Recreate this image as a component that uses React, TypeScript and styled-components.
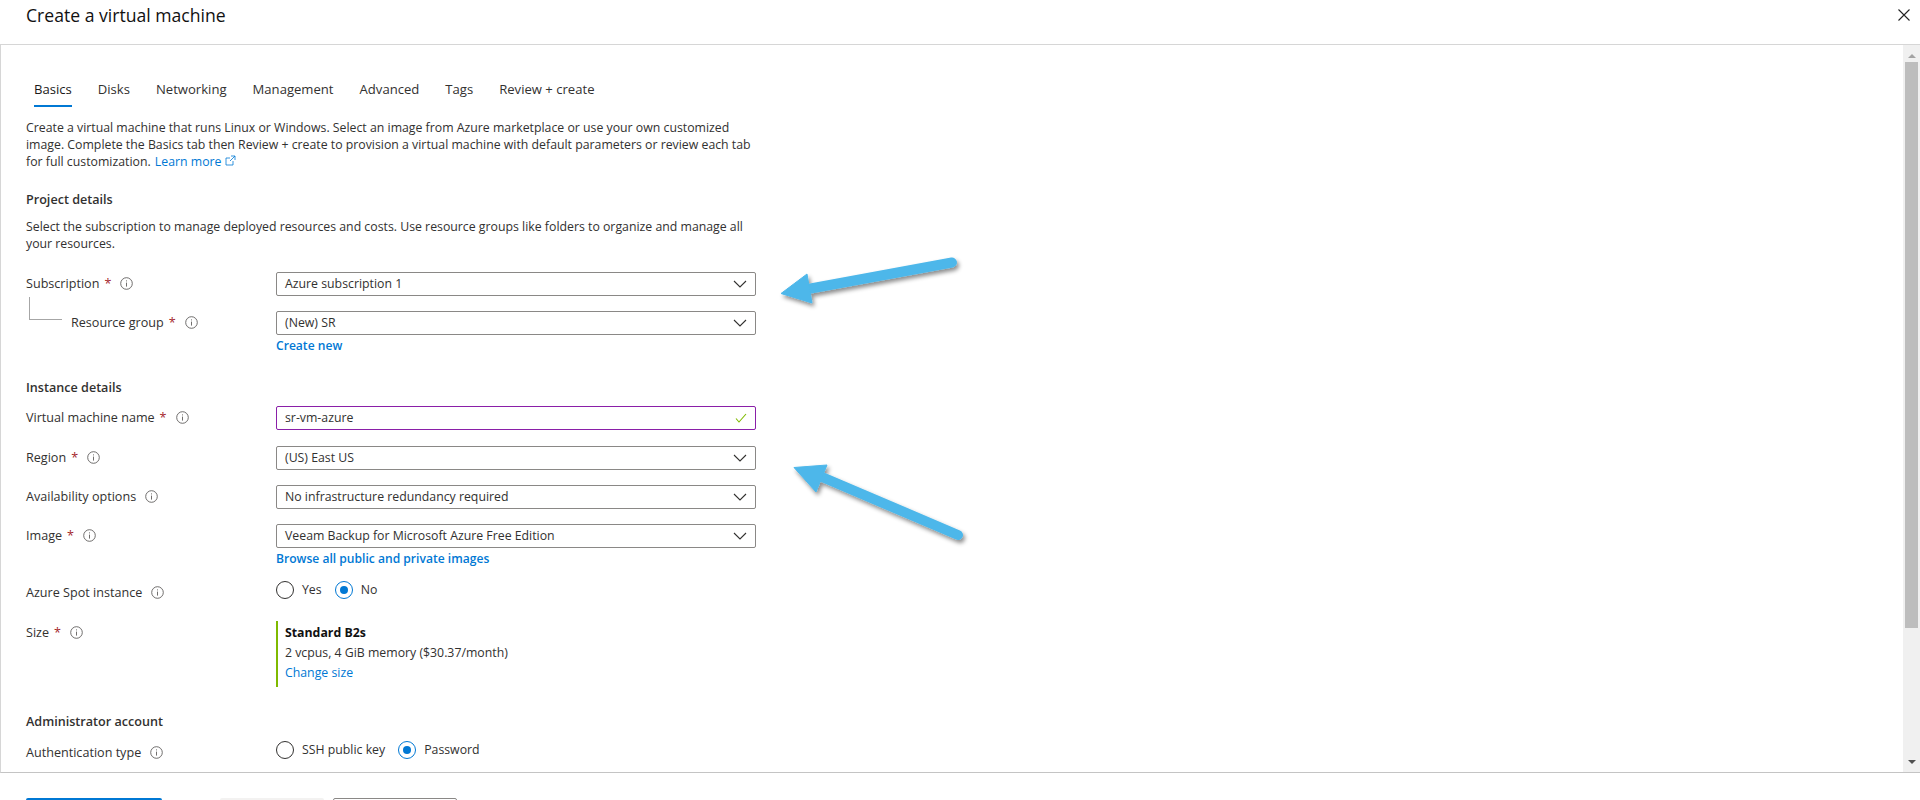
import styled, { createGlobalStyle } from 'styled-components'

const GlobalStyle = createGlobalStyle`
  html, body {
    margin: 0;
    padding: 0;
    background: #fff;
    overflow: hidden;
  }
  * {
    box-sizing: border-box;
  }
`

const Page = styled.div`
  position: relative;
  width: 1920px;
  height: 800px;
  overflow: hidden;
  display: flex;
  flex-direction: column;
  background: #fff;
  color: #323130;
  font-family: 'Open Sans', 'Liberation Sans', sans-serif;
  font-size: 12.3px;
  line-height: 18px;
`

const Header = styled.header`
  flex: 0 0 45px;
  display: flex;
  justify-content: space-between;
  padding: 1px 10px 0 26px;
  border-bottom: 1px solid #d6d6d6;
`

const Title = styled.h1`
  margin: 0;
  font-size: 17.6px;
  line-height: 28px;
  font-weight: 400;
  color: #111;
`

const CloseIcon = styled.svg`
  width: 12px;
  height: 12px;
  margin-top: 8px;
`

const Middle = styled.div`
  flex: 0 0 728px;
  display: flex;
  border-left: 1px solid #d6d6d6;
  border-bottom: 1px solid #c4c4c4;
`

const Content = styled.main`
  flex: 1;
  overflow: hidden;
  padding-left: 25px;
`

const Tabs = styled.nav`
  display: flex;
  gap: 26px;
  margin-top: 35px;
  padding-left: 8px;
  font-size: 13.1px;
`

const Tab = styled.span<{ $active?: boolean }>`
  padding-bottom: 7px;
  border-bottom: 2px solid ${p => (p.$active ? '#0078d4' : 'transparent')};
  color: ${p => (p.$active ? '#1b1a19' : '#323130')};
`

const Para = styled.p<{ $top: number }>`
  width: 730px;
  margin: ${p => p.$top}px 0 0;
  line-height: 16.8px;
`

const Link = styled.a`
  color: #0078d4;
  text-decoration: none;
`

const LearnMore = styled(Link)`
  margin-left: 1px;
`

const StrongLink = styled(Link)`
  display: block;
  font-size: 12.1px;
  font-weight: 600;
  margin-top: 2px;
`

const SectionTitle = styled.h2<{ $top: number }>`
  margin: ${p => p.$top}px 0 0;
  font-size: 12.6px;
  line-height: 18px;
  font-weight: 600;
  color: #323130;
`

const Row = styled.div<{ $top: number }>`
  display: grid;
  grid-template-columns: 250px 480px;
  align-items: start;
  margin-top: ${p => p.$top}px;
`

const Label = styled.div<{ $indent?: boolean }>`
  position: relative;
  display: flex;
  align-items: center;
  height: 24px;
  padding-left: ${p => (p.$indent ? '45px' : '0')};
  font-size: 12.6px;
`

const Star = styled.span`
  color: #a4262c;
  margin-left: 5px;
`

const InfoIcon = styled.svg`
  width: 13px;
  height: 13px;
  margin-left: 9px;
`

const TreeLine = styled.span`
  position: absolute;
  left: 3px;
  top: -14px;
  width: 33px;
  height: 23px;
  border-left: 1px solid #a6a6a6;
  border-bottom: 1px solid #a6a6a6;
`

const Field = styled.div<{ $valid?: boolean }>`
  display: flex;
  align-items: center;
  justify-content: space-between;
  height: 24px;
  padding: 0 8px;
  background: #fff;
  border: 1px solid ${p => (p.$valid ? '#8a1fa8' : '#8a8886')};
  border-radius: 2px;
`

const ChevronIcon = styled.svg`
  width: 14px;
  height: 8px;
`

const CheckIcon = styled.svg`
  width: 12px;
  height: 10px;
`

const RadioGroup = styled.div`
  display: flex;
  align-items: center;
  height: 18px;
`

const Radio = styled.span<{ $checked?: boolean }>`
  width: 18px;
  height: 18px;
  border-radius: 50%;
  border: 1px solid ${p => (p.$checked ? '#0078d4' : '#323130')};
  display: flex;
  align-items: center;
  justify-content: center;
  flex: none;
  &::after {
    content: '';
    display: ${p => (p.$checked ? 'block' : 'none')};
    width: 8px;
    height: 8px;
    border-radius: 50%;
    background: #0078d4;
  }
`

const RadioText = styled.span`
  margin: 0 13px 0 8px;
`

const SizeBlock = styled.div`
  height: 66px;
  padding: 2px 0 0 7px;
  border-left: 2px solid #7fba00;
  line-height: 20px;
`

const SizeName = styled.div`
  font-weight: 700;
  color: #111;
`

const Scrollbar = styled.div`
  flex: 0 0 17px;
  display: flex;
  flex-direction: column;
  align-items: center;
  background: #f0f0f0;
  padding: 9px 2px 0;
`

const ScrollArrow = styled.span<{ $down?: boolean }>`
  width: 0;
  height: 0;
  border-left: 4px solid transparent;
  border-right: 4px solid transparent;
  ${p => (p.$down ? 'border-top: 4px solid #505050;' : 'border-bottom: 4px solid #a3a3a3;')}
`

const ScrollThumb = styled.div`
  width: 13px;
  height: 566px;
  margin-top: 4px;
  margin-bottom: auto;
  background: #bdbdbd;
`

const ScrollEnd = styled.div`
  height: 8px;
`

const Footer = styled.footer`
  flex: 1;
  display: flex;
  padding: 25px 0 0 26px;
`

const FooterButton = styled.div<{ $w: number; $kind: 'primary' | 'muted' | 'plain'; $left: number }>`
  width: ${p => p.$w}px;
  height: 32px;
  margin-left: ${p => p.$left}px;
  border-radius: 2px;
  background: ${p => (p.$kind === 'primary' ? '#0078d4' : p.$kind === 'muted' ? '#f3f2f1' : '#fff')};
  border: 1px solid ${p => (p.$kind === 'plain' ? '#8a8886' : 'transparent')};
`

const ArrowLayer = styled.svg`
  position: absolute;
  left: 0;
  top: 0;
  pointer-events: none;
`

const Info = () => (
  <InfoIcon viewBox='0 0 13 13' fill='none' stroke='#605e5c' strokeWidth='0.9'>
    <circle cx='6.5' cy='6.5' r='5.8' />
    <path d='M6.5 5.6v4M6.5 3.4v1' />
  </InfoIcon>
)

const Chevron = () => (
  <ChevronIcon viewBox='0 0 14 8' fill='none' stroke='#323130' strokeWidth='1.1'>
    <path d='M1 1l6 6 6-6' />
  </ChevronIcon>
)

const Select = ({ value }: { value: string }) => (
  <Field>
    {value}
    <Chevron />
  </Field>
)

const App = () => (
  <Page>
    <GlobalStyle />
    <Header>
      <Title>Create a virtual machine</Title>
      <CloseIcon viewBox='0 0 12 12' fill='none' stroke='#222' strokeWidth='1.1'>
        <path d='M0.5 0.5l11 11M11.5 0.5l-11 11' />
      </CloseIcon>
    </Header>

    <Middle>
      <Content>
        <Tabs>
          <Tab $active>Basics</Tab>
          <Tab>Disks</Tab>
          <Tab>Networking</Tab>
          <Tab>Management</Tab>
          <Tab>Advanced</Tab>
          <Tab>Tags</Tab>
          <Tab>Review + create</Tab>
        </Tabs>

        <Para $top={13}>
          Create a virtual machine that runs Linux or Windows. Select an image from Azure marketplace or use your own
          customized image. Complete the Basics tab then Review + create to provision a virtual machine with default
          parameters or review each tab for full customization.{' '}
          <LearnMore href='#'>
            Learn more{' '}
            <svg width='11' height='11' viewBox='0 0 11 11' fill='none' stroke='#0078d4' strokeWidth='0.8'>
              <path d='M8 6v4H1V3h4M6 1h4v4M10 1L5 6' />
            </svg>
          </LearnMore>
        </Para>

        <SectionTitle $top={21}>Project details</SectionTitle>
        <Para $top={10}>
          Select the subscription to manage deployed resources and costs. Use resource groups like folders to organize
          and manage all your resources.
        </Para>

        <Row $top={19}>
          <Label>
            Subscription<Star>*</Star>
            <Info />
          </Label>
          <Select value='Azure subscription 1' />
        </Row>
        <Row $top={15}>
          <Label $indent>
            <TreeLine />
            Resource group<Star>*</Star>
            <Info />
          </Label>
          <div>
            <Select value='(New) SR' />
            <StrongLink href='#'>Create new</StrongLink>
          </div>
        </Row>

        <SectionTitle $top={24}>Instance details</SectionTitle>
        <Row $top={9}>
          <Label>
            Virtual machine name<Star>*</Star>
            <Info />
          </Label>
          <Field $valid>
            sr-vm-azure
            <CheckIcon viewBox='0 0 12 10' fill='none' stroke='#7fba00' strokeWidth='1.1'>
              <path d='M1 5.5l3 3.5L11 1' />
            </CheckIcon>
          </Field>
        </Row>
        <Row $top={16}>
          <Label>
            Region<Star>*</Star>
            <Info />
          </Label>
          <Select value='(US) East US' />
        </Row>
        <Row $top={15}>
          <Label>
            Availability options
            <Info />
          </Label>
          <Select value='No infrastructure redundancy required' />
        </Row>
        <Row $top={15}>
          <Label>
            Image<Star>*</Star>
            <Info />
          </Label>
          <div>
            <Select value='Veeam Backup for Microsoft Azure Free Edition' />
            <StrongLink href='#'>Browse all public and private images</StrongLink>
          </div>
        </Row>
        <Row $top={13}>
          <Label>
            Azure Spot instance
            <Info />
          </Label>
          <RadioGroup>
            <Radio />
            <RadioText>Yes</RadioText>
            <Radio $checked />
            <RadioText>No</RadioText>
          </RadioGroup>
        </Row>
        <Row $top={16}>
          <Label>
            Size<Star>*</Star>
            <Info />
          </Label>
          <SizeBlock>
            <SizeName>Standard B2s</SizeName>
            <div>2 vcpus, 4 GiB memory ($30.37/month)</div>
            <Link href='#'>Change size</Link>
          </SizeBlock>
        </Row>

        <SectionTitle $top={26}>Administrator account</SectionTitle>
        <Row $top={10}>
          <Label>
            Authentication type
            <Info />
          </Label>
          <RadioGroup>
            <Radio />
            <RadioText>SSH public key</RadioText>
            <Radio $checked />
            <RadioText>Password</RadioText>
          </RadioGroup>
        </Row>
      </Content>

      <Scrollbar>
        <ScrollArrow />
        <ScrollThumb />
        <ScrollArrow $down />
        <ScrollEnd />
      </Scrollbar>
    </Middle>

    <Footer>
      <FooterButton $w={136} $kind='primary' $left={0} />
      <FooterButton $w={104} $kind='muted' $left={58} />
      <FooterButton $w={124} $kind='plain' $left={9} />
    </Footer>

    <ArrowLayer width='1920' height='800' viewBox='0 0 1920 800'>
      <defs>
        <filter id='arrowShadow' x='-20%' y='-20%' width='140%' height='140%'>
          <feDropShadow dx='2' dy='3' stdDeviation='2' floodColor='#000' floodOpacity='0.45' />
        </filter>
      </defs>
      <g filter='url(#arrowShadow)' fill='#4db7ea' stroke='#4db7ea'>
        <path d='M952 262.5L808 289' strokeWidth='10' strokeLinecap='round' fill='none' />
        <path d='M781 293.5L807 274L812 303Z' strokeWidth='1' />
        <path d='M958 535L822 477' strokeWidth='10' strokeLinecap='round' fill='none' />
        <path d='M794 467.5L827 465L816 492Z' strokeWidth='1' />
      </g>
    </ArrowLayer>
  </Page>
)

export default App
